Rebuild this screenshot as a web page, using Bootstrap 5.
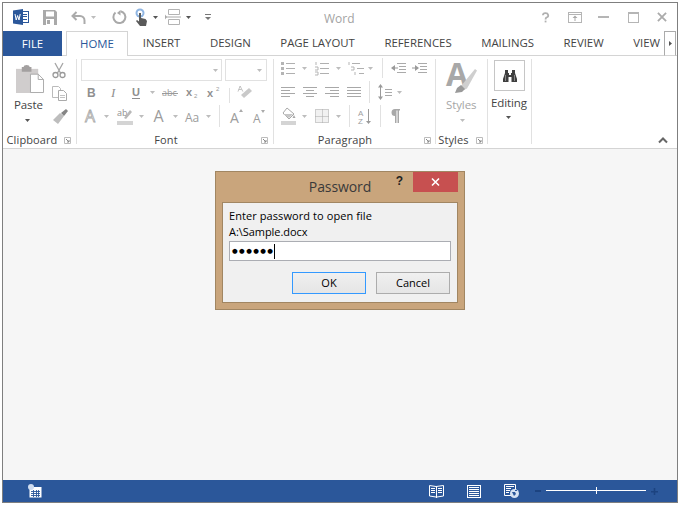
<!DOCTYPE html>
<html lang="en">
<head>
<meta charset="utf-8">
<title>Word</title>
<link href="https://cdn.jsdelivr.net/npm/bootstrap@5.3.0/dist/css/bootstrap.min.css" rel="stylesheet">
<style>
html,body{margin:0;background:#fff;height:100%;overflow:hidden}
body{padding:2px;font-family:"Open Sans","Noto Sans",sans-serif;color:#444}
svg{flex:none;display:block;overflow:visible}
.appwin{width:676px;height:501px;border:1px solid #7f7f7f;display:flex;flex-direction:column;background:#fff}
.titlerow{height:28px;align-items:center;flex:none}
.apptitle{position:absolute;left:321px;top:8px;font-size:12px;line-height:16px;color:#a3a3a3}
.tabrow{height:25px;flex:none;border-bottom:1px solid #d4d4d4;font-size:11.4px;color:#444}
.tabfile{width:59px;flex:none;margin-bottom:-1px;background:#2b579a;color:#fff;display:flex;align-items:center;justify-content:center}
.tabitem{display:flex;flex:none;align-items:center;padding:0 14.75px;line-height:24px;white-space:nowrap}
.tabactive{width:62px;margin-left:4px;margin-bottom:-1px;justify-content:center;padding:0;background:#fff;color:#2b579a;border:1px solid #d4d4d4;border-bottom:0}
.tabend{padding-right:2px}
.tabscroll{width:12px;flex:none;margin-left:auto;margin-right:1px;margin-bottom:-1px;border:1px solid #ababab;border-bottom-color:#d4d4d4;display:flex;align-items:center;justify-content:center}
.ribbonbar{height:93px;flex:none;padding-top:3px;border-bottom:1px solid #d4d4d4;background:#fff}
.rgroup{height:85px;flex:none;border-right:1px solid #e1e1e1;display:flex;flex-direction:column}
.rbody{height:75px;flex:none}
.rlabel{height:12px;flex:none;display:flex;align-items:center;font-size:11px;line-height:12px;color:#444;letter-spacing:.1px}
.rlabel span{text-align:center;white-space:nowrap}
.wclip{width:74px}.wfont{width:197px}.wpara{width:162px}.wstyles{width:52px}.wedit{width:44px}
.lb58{width:58px}.lb178{width:178px}.lb142{width:142px}.lb35{width:35px}
.combo1{width:141px;height:22px;border:1px solid #e1e1e1;margin-left:4px;display:flex;align-items:center;justify-content:flex-end;padding-right:3px}
.combo2{width:42px;height:22px;border:1px solid #e1e1e1;margin-left:3px;display:flex;align-items:center;justify-content:flex-end;padding-right:4px}
.trow{display:flex;align-items:center;height:24px}
.trow18{height:18px}.trow22{height:22px}.trow26{height:26px}
.vsep{width:1px;background:#e1e1e1;flex:none}
.vs15{height:15px;align-self:flex-end}.vs20{height:20px}.vs22{height:22px}
.l3{margin-left:3px}.l4{margin-left:4px}.l5{margin-left:5px}.l6{margin-left:6px}.l7{margin-left:7px}.l8{margin-left:8px}.l9{margin-left:9px}.l10{margin-left:10px}.l11{margin-left:11px}.l13{margin-left:13px}.l14{margin-left:14px}.l16{margin-left:16px}.l18{margin-left:18px}.l19{margin-left:19px}.l22{margin-left:22px}.l23{margin-left:23px}.l25{margin-left:25px}
.t1{margin-top:1px}.t2{margin-top:2px}.t3{margin-top:3px}.t4{margin-top:4px}.t6{margin-top:6px}
.bigtext{font-size:11.5px;line-height:20px;color:#444;letter-spacing:-.1px}
.bigdim{color:#a6a6a6}
.finder{width:31px;height:31px;border:1px solid #c6c6c6;margin-left:6px;margin-top:1px;display:flex;align-items:center;justify-content:center}
.rrest{flex:1;display:flex;align-items:flex-end;justify-content:flex-end;padding:0 9px 5px 0}
.docarea{flex:1;background:#f6f6f6;padding-top:22px;display:flex;justify-content:center;align-items:flex-start}
.pwbox{width:250px;height:139px;border:1px solid #a18662;background:#c9a57c;display:flex;flex-direction:column;color:#000}
.pwtop{height:30px;flex:none;display:flex;padding:0 6px}
.pwside{flex:1;display:flex;justify-content:flex-end;align-items:flex-start}
.pwtitle{font-size:14px;line-height:20px;padding-top:5px;color:#3a3a3a;white-space:nowrap;width:62px;display:flex;justify-content:center;letter-spacing:-.1px}
.pwhelp{font-size:12px;line-height:18px;font-weight:700;margin-right:10px;color:#222;font-family:"Liberation Sans",sans-serif}
.pwclose{width:45px;height:20px;background:#c75050;display:flex;align-items:center;justify-content:center}
.pwinner{height:101px;margin:0 6px;border:1px solid #a18662;background:#f0f0f0;padding:5px 6px 0;font-size:11px;line-height:16px;letter-spacing:.08px}
.pwpath{letter-spacing:-.05px}
.pwfield.form-control{width:222px;height:20px;margin-top:1px;border:1px solid #abadb3;border-radius:0;padding:0 2px;background:#fff;display:flex;align-items:center;font-family:"DejaVu Sans",sans-serif;font-size:6.5px;letter-spacing:1.4px;color:#000}
.pwdots{padding-top:2px}
.pwcaret{width:1px;height:15px;background:#000}
.pwbtn.btn{width:74px;height:22px;padding:0;border-radius:0;font-size:11px;line-height:20px;color:#000;border:1px solid #acacac;background:linear-gradient(#f0f0f0,#e5e5e5)}
.pwok.btn{border-color:#3399ff;margin-left:63px;margin-right:10px}
.pwbtnrow{margin-top:11px}
.statusrow{height:22px;flex:none;background:#2b579a;align-items:center}
.stick{width:100px;height:1px;margin-bottom:2px;background:#fff;flex:none;position:relative}
.stick::after{content:"";position:absolute;left:50px;top:-3px;width:1px;height:7px;background:#fff}
.endpad{width:19px;flex:none}
</style>
</head>
<body>
<svg width="0" height="0" class="position-absolute">
  <defs>
    <symbol id="cr" viewBox="0 0 5 3"><path d="M0 0h5L2.5 3z" fill="#bdbdbd"/></symbol>
    <symbol id="crd" viewBox="0 0 5 3"><path d="M0 0h5L2.5 3z" fill="#555"/></symbol>
    <symbol id="launch" viewBox="0 0 7 7"><path d="M.5.5h6v6h-6z" fill="none" stroke="#bcbcbc"/><path d="M2 2l3 3M5 3v2H3" fill="none" stroke="#888"/></symbol>
    <symbol id="al" viewBox="0 0 14 11"><path d="M0 .5h14M0 3.5h9M0 6.5h14M0 9.5h9" stroke="#a8a8a8"/></symbol>
    <symbol id="ac" viewBox="0 0 14 11"><path d="M0 .5h14M3 3.5h8M0 6.5h14M3 9.5h8" stroke="#a8a8a8"/></symbol>
    <symbol id="ar" viewBox="0 0 14 11"><path d="M0 .5h14M5 3.5h9M0 6.5h14M5 9.5h9" stroke="#a8a8a8"/></symbol>
    <symbol id="aj" viewBox="0 0 14 11"><path d="M0 .5h14M0 3.5h14M0 6.5h14M0 9.5h14" stroke="#a8a8a8"/></symbol>
  </defs>
</svg>
<div class="appwin">
  <div class="d-flex titlerow position-relative">
    <svg class="l10" width="16" height="16" viewBox="0 0 16 16"><rect x="6.500" y="2.500" width="9" height="11" fill="#fff" stroke="#2b579a"/><path d="M10 5.500h4M10 7.500h4M10 10.500h4" stroke="#2b579a"/><path d="M0 1.500l10-1.500v16l-10-1.500z" fill="#2b579a"/><path d="M2 5l1.200 6 1.400-4.500L6 11l1.200-6" fill="none" stroke="#fff" stroke-width="1"/></svg>
    <svg class="l14" width="14" height="15" viewBox="0 0 14 15"><path d="M0 0h12l2 2v13H0z" fill="#a9a9a9"/><rect x="3" y="1.500" width="8" height="5" fill="#fff"/><rect x="3" y="9" width="8" height="6" fill="#fff"/><rect x="4" y="10" width="3" height="4" fill="#a9a9a9"/></svg>
    <svg class="l14" width="15" height="13" viewBox="0 0 15 13"><path d="M5.500 1L1.500 5l4 4M2 5h7a4.500 4.500 0 0 1 4.500 4.500V13" fill="none" stroke="#ababab" stroke-width="2"/></svg>
    <svg class="l5" width="5" height="3"><use href="#cr"/></svg>
    <svg class="l16" width="14" height="14" viewBox="0 0 14 14"><path d="M3.500 2.500a6 6 0 1 0 5-1.300" fill="none" stroke="#a9a9a9" stroke-width="2"/><path d="M8.500 0v5.500L5 3z" fill="#a9a9a9"/></svg>
    <svg class="l9" width="13" height="18" viewBox="0 0 13 18"><circle cx="5" cy="5" r="4.500" fill="#8fb5e2"/><circle cx="5" cy="5" r="2.500" fill="#fff"/><path d="M4 5h2v5l4.500 1 1.500 2-1 5H5L1 13l1-1 2 1.500z" fill="#5a5a5a"/></svg>
    <svg class="l5" width="5" height="3"><use href="#crd"/></svg>
    <svg class="l7" width="16" height="16" viewBox="0 0 16 16"><path d="M3.500.5h11v5h-11zM3.500 10.500h11v5h-11z" fill="#fff" stroke="#b3b3b3"/><path d="M1 8h15" stroke="#a8a8a8"/><path d="M0 5.500l2 2.500-2 2.500z" fill="#a8a8a8"/></svg>
    <svg class="l5" width="5" height="3"><use href="#crd"/></svg>
    <svg class="l14" width="6" height="6" viewBox="0 0 6 6"><path d="M0 .5h6" stroke="#777"/><path d="M0 3h6L3 6z" fill="#777"/></svg>
    <span class="apptitle">Word</span>
    <svg class="ms-auto" width="8" height="11" viewBox="0 0 9 11"><path d="M1 3a3 2.500 0 1 1 4 2.500c-1 .6-1 1-1 2.200" fill="none" stroke="#b0b0b0" stroke-width="2"/><rect x="3" y="9" width="2" height="2" fill="#b0b0b0"/></svg>
    <svg class="l18" width="14" height="11" viewBox="0 0 14 11"><rect x=".5" y=".5" width="13" height="10" fill="#fff" stroke="#b5b5b5"/><path d="M1 2.500h12" stroke="#b5b5b5"/><path d="M7 3.500L4.500 6h5zM6.500 6h1v3h-1z" fill="#a9a9a9"/></svg>
    <svg class="l16" width="11" height="2"><rect width="11" height="2" fill="#b5b5b5"/></svg>
    <svg class="l19" width="11" height="11" viewBox="0 0 11 11"><rect x=".5" y=".5" width="10" height="10" fill="#fff" stroke="#b5b5b5"/><rect width="11" height="2" fill="#b5b5b5"/></svg>
    <svg class="l18" width="10" height="10" viewBox="0 0 11 11"><path d="M1 1l9 9M10 1l-9 9" stroke="#ababab" stroke-width="2"/></svg>
    <div class="l10"></div>
  </div>

  <div class="d-flex tabrow">
    <div class="tabfile">FILE</div>
    <div class="tabitem tabactive">HOME</div>
    <div class="tabitem">INSERT</div>
    <div class="tabitem">DESIGN</div>
    <div class="tabitem">PAGE LAYOUT</div>
    <div class="tabitem">REFERENCES</div>
    <div class="tabitem">MAILINGS</div>
    <div class="tabitem">REVIEW</div>
    <div class="tabitem tabend">VIEW</div>
    <div class="tabscroll"><svg width="3" height="5" viewBox="0 0 3 5"><path d="M0 0l3 2.500L0 5z" fill="#555"/></svg></div>
  </div>

  <div class="d-flex ribbonbar">
    <div class="rgroup wclip">
      <div class="rbody d-flex">
        <div class="d-flex flex-column align-items-start">
          <svg class="l13 t6" width="28" height="28" viewBox="0 0 29 29"><path d="M0 4h23v25H0z" fill="#d0cdcd"/><path d="M6 2h2a3 2 0 0 1 6 0h2v5H6z" fill="#a3a0a0"/><path d="M15 9.500h8l5.500 5.500v13.500H15z" fill="#fff" stroke="#aaa"/><path d="M23 9.500v5.500h5.500" fill="none" stroke="#aaa"/></svg>
          <span class="bigtext l11 t2">Paste</span>
          <svg class="t4 l22" width="5" height="3"><use href="#crd"/></svg>
        </div>
        <div class="d-flex flex-column gap-2 l8 t4">
          <svg width="14" height="15" viewBox="0 0 14 15"><path d="M3 0l5.500 10M11 0L5.500 10" stroke="#a5a5a5" stroke-width="1.300" fill="none"/><circle cx="3.500" cy="12" r="2.500" fill="none" stroke="#9a9a9a" stroke-width="1.300"/><circle cx="10.500" cy="12" r="2.500" fill="none" stroke="#9a9a9a" stroke-width="1.300"/></svg>
          <svg width="15" height="15" viewBox="0 0 15 15"><path d="M.5.500h6l2 2v9h-8z" fill="#fff" stroke="#bbb"/><path d="M6.500 4.500h5l3 3v7h-8z" fill="#fff" stroke="#aaa"/><path d="M8 9.500h5M8 11.500h5" stroke="#c3c3c3"/></svg>
          <svg width="16" height="15" viewBox="0 0 16 15"><path d="M1 11l7-7 4 3-6 8z" fill="#bdbdbd"/><path d="M9 4l5-4 2 2-4 5z" fill="#858585"/></svg>
        </div>
      </div>
      <div class="rlabel"><span class="lb58">Clipboard</span><svg class="l3" width="7" height="7"><use href="#launch"/></svg></div>
    </div>

    <div class="rgroup wfont">
      <div class="rbody">
        <div class="d-flex">
          <div class="combo1"><svg width="5" height="3"><use href="#cr"/></svg></div>
          <div class="combo2"><svg width="5" height="3"><use href="#cr"/></svg></div>
        </div>
        <div class="trow trow22">
          <svg class="l10" width="8" height="12"><text x="0" y="11" font-family="Liberation Sans" font-weight="700" font-size="12" fill="#8f8f8f">B</text></svg>
          <svg class="l16" width="7" height="12"><text x="0" y="11" font-family="Liberation Serif" font-style="italic" font-size="13" fill="#8f8f8f">I</text></svg>
          <svg class="l14" width="8" height="13" viewBox="0 0 8 13"><text x="0" y="10" font-family="Liberation Sans" font-weight="700" font-size="11" fill="#8f8f8f">U</text><path d="M0 12.500h8" stroke="#8f8f8f"/></svg>
          <svg class="l10" width="5" height="3"><use href="#cr"/></svg>
          <svg class="l7" width="16" height="12"><text x="0" y="10" font-family="Open Sans" font-size="9" fill="#9a9a9a">abc</text><path d="M0 7.500h16" stroke="#9a9a9a"/></svg>
          <svg class="l8" width="12" height="13"><text x="0" y="10" font-family="Liberation Sans" font-weight="700" font-size="11" fill="#8f8f8f">x</text><text x="8" y="12" font-family="Liberation Sans" font-size="6" fill="#999">2</text></svg>
          <svg class="l9" width="13" height="13"><text x="0" y="11" font-family="Liberation Sans" font-weight="700" font-size="11" fill="#8f8f8f">x</text><text x="9" y="5" font-family="Liberation Sans" font-size="6" fill="#999">2</text></svg>
          <div class="vsep vs15 l9"></div>
          <svg class="l8" width="16" height="15" viewBox="0 0 16 15"><path d="M6 13l8-7-3-3-8 7z" fill="#c9c9c9"/><path d="M3 0l4 8M3 0L0 8M1 5h4" stroke="#aaa" fill="none" transform="translate(0 1) scale(.7)"/></svg>
        </div>
        <div class="trow trow26">
          <svg class="l8" width="15" height="16"><text x="0" y="14" font-family="Open Sans" font-size="16" fill="#fff" stroke="#a9a9a9" stroke-width=".8">A</text></svg>
          <svg class="l4" width="5" height="3"><use href="#cr"/></svg>
          <svg class="l8" width="16" height="17" viewBox="0 0 16 17"><text x="0" y="8" font-family="Open Sans" font-size="9" fill="#8f8f8f">ab</text><path d="M7 10l6-8 2 2-6 7z" fill="#b8b8b8"/><rect y="13" width="16" height="4" fill="#d4d4d4"/></svg>
          <svg class="l6" width="5" height="3"><use href="#cr"/></svg>
          <svg class="l10" width="11" height="14"><text x="-.5" y="13" font-family="Open Sans" font-size="16" fill="#9c9c9c">A</text></svg>
          <svg class="l8" width="5" height="3"><use href="#cr"/></svg>
          <svg class="l7" width="15" height="14"><text x="0" y="13" font-family="Open Sans" font-size="12" fill="#9c9c9c">Aa</text></svg>
          <svg class="l6" width="5" height="3"><use href="#cr"/></svg>
          <div class="vsep vs22 l8"></div>
          <svg class="l10" width="13" height="15"><text x="0" y="14" font-family="Open Sans" font-size="14" fill="#9c9c9c">A</text><path d="M9 3h4L11 0z" fill="#aaa"/></svg>
          <svg class="l10" width="12" height="15"><text x="0" y="14" font-family="Open Sans" font-size="12" fill="#9c9c9c">A</text><path d="M8 1h4l-2 3z" fill="#aaa"/></svg>
        </div>
      </div>
      <div class="rlabel"><span class="lb178">Font</span><svg class="l6" width="7" height="7"><use href="#launch"/></svg></div>
    </div>

    <div class="rgroup wpara">
      <div class="rbody">
        <div class="trow trow18">
          <svg class="l7" width="14" height="13" viewBox="0 0 14 13"><path d="M0 0h3v3H0zM0 5h3v3H0zM0 10h3v3H0z" fill="#b5b5b5"/><path d="M5 1.500h9M5 6.500h9M5 11.500h9" stroke="#b0b0b0"/></svg>
          <svg class="l7" width="5" height="3"><use href="#cr"/></svg>
          <svg class="l8" width="14" height="13" viewBox="0 0 14 13"><path d="M1 0v3M0 5h3v3H0M0 10h3v3H0" fill="none" stroke="#b5b5b5"/><path d="M5 1.500h9M5 6.500h9M5 11.500h9" stroke="#b0b0b0"/></svg>
          <svg class="l7" width="5" height="3"><use href="#cr"/></svg>
          <svg class="l7" width="16" height="13" viewBox="0 0 16 13"><path d="M1 0v3M3 5h3v3H3M7 10v3" fill="none" stroke="#b5b5b5"/><path d="M4 1.500h8M9 6.500h7M11 11.500h5" stroke="#b0b0b0"/></svg>
          <svg class="l4" width="5" height="3"><use href="#cr"/></svg>
          <div class="vsep vs20 l9"></div>
          <svg class="l8" width="15" height="11" viewBox="0 0 15 11"><path d="M6 .500h9M8 3.500h7M8 6.500h7M6 9.500h9" stroke="#aaa"/><path d="M0 5l4-3v6z" fill="#9a9a9a"/><path d="M3 5h4" stroke="#9a9a9a"/></svg>
          <svg class="l6" width="15" height="11" viewBox="0 0 15 11"><path d="M6 .500h9M8 3.500h7M8 6.500h7M6 9.500h9" stroke="#aaa"/><path d="M7 5L3 2v6z" fill="#9a9a9a"/><path d="M0 5h4" stroke="#9a9a9a"/></svg>
        </div>
        <div class="trow t3">
          <svg class="l7" width="14" height="11"><use href="#al"/></svg>
          <svg class="l8" width="14" height="11"><use href="#ac"/></svg>
          <svg class="l8" width="14" height="11"><use href="#ar"/></svg>
          <svg class="l8" width="14" height="11"><use href="#aj"/></svg>
          <div class="vsep vs22 l8"></div>
          <svg class="l8" width="14" height="16" viewBox="0 0 14 16"><path d="M2.500 1v14" stroke="#9a9a9a"/><path d="M0 3.500l2.500-3.500L5 3.500zM0 12.500l2.500 3.500L5 12.500z" fill="#9a9a9a"/><path d="M7 5.500h7M7 8.500h7M7 11.500h7" stroke="#aaa"/></svg>
          <svg class="l5" width="5" height="3"><use href="#cr"/></svg>
        </div>
        <div class="trow">
          <svg class="l7" width="15" height="17" viewBox="0 0 15 17"><path d="M6 0l7 6-5 5-6-6z" fill="#fff" stroke="#a8a8a8"/><path d="M2 6h10l-4 4z" fill="#c6c6c6"/><path d="M13 7l1.500 3h-3z" fill="#a8a8a8"/><rect y="13" width="15" height="4" fill="#d4d4d4"/></svg>
          <svg class="l6" width="5" height="3"><use href="#cr"/></svg>
          <svg class="l8" width="14" height="14" viewBox="0 0 14 14"><rect width="14" height="14" fill="#f1f1f1"/><path d="M.5.500h13v13H.5zM7.500 .5v13M.5 7.500h13" fill="none" stroke="#a8a8a8" stroke-dasharray="1 1"/></svg>
          <svg class="l7" width="5" height="3"><use href="#cr"/></svg>
          <div class="vsep vs22 l8"></div>
          <svg class="l8" width="14" height="17" viewBox="0 0 14 17"><text x="0" y="7.500" font-family="Liberation Sans" font-size="8" fill="#a0a0a0">A</text><text x="0" y="16" font-family="Liberation Sans" font-size="8" fill="#a0a0a0">Z</text><path d="M10.500 1v14" stroke="#9a9a9a"/><path d="M8 13h5l-2.500 3z" fill="#9a9a9a"/></svg>
          <div class="vsep vs22 l8"></div>
          <svg class="l10" width="9" height="14" viewBox="0 0 9 14"><path d="M4 0a3.500 3.500 0 0 0 0 7v7h1.500V1.500h1V14H8V1.500h1V0z" fill="#a8a8a8"/></svg>
        </div>
      </div>
      <div class="rlabel"><span class="lb142">Paragraph</span><svg class="l8" width="7" height="7"><use href="#launch"/></svg></div>
    </div>

    <div class="rgroup wstyles">
      <div class="rbody d-flex flex-column align-items-start">
        <svg class="l10 t3" width="32" height="31" viewBox="0 0 32 31"><text x="0" y="24" font-family="Open Sans" font-weight="700" font-size="32" fill="#a8a8a8">A</text><path d="M15 24L29 7l2 1.500-10 18-3 1.500z" fill="#cfcfcf"/><path d="M9 31l2-5 4-3 4 4-3 3z" fill="#9a9a9a"/></svg>
        <span class="bigtext bigdim l10 t2">Styles</span>
        <svg class="t4 ms-4" width="5" height="3"><use href="#cr"/></svg>
      </div>
      <div class="rlabel"><span class="lb35">Styles</span><svg class="l5" width="7" height="7"><use href="#launch"/></svg></div>
    </div>

    <div class="rgroup wedit">
      <div class="rbody d-flex flex-column align-items-start">
        <div class="finder"><svg width="14" height="12" viewBox="0 0 14 12"><path d="M2 0h3v3h1v2h2V3h1V0h3v3l2 6v3H8.500V7h-3v5H0V9l2-6z" fill="#3f3f3f"/><path d="M2.500 5v6M11.500 5v6" stroke="#9a9a9a" stroke-width=".8"/></svg></div>
        <span class="bigtext l3 t2">Editing</span>
        <svg class="t3 l18" width="5" height="3"><use href="#crd"/></svg>
      </div>
    </div>

    <div class="rrest">
      <svg width="10" height="6" viewBox="0 0 10 6"><path d="M1 5.500l4-4 4 4" fill="none" stroke="#666" stroke-width="2"/></svg>
    </div>
  </div>

  <div class="docarea">
    <div class="pwbox">
      <div class="pwtop">
        <div class="pwside"></div>
        <div class="pwtitle">Password</div>
        <div class="pwside">
          <span class="pwhelp">?</span>
          <div class="pwclose"><svg width="9" height="8" viewBox="0 0 9 8"><path d="M1 .5l7 7M8 .5l-7 7" stroke="#fff" stroke-width="1.600"/></svg></div>
        </div>
      </div>
      <div class="pwinner">
        <div>Enter password to open file</div>
        <div class="pwpath">A:\Sample.docx</div>
        <div class="pwfield form-control"><span class="pwdots">●●●●●●</span><span class="pwcaret"></span></div>
        <div class="d-flex pwbtnrow">
          <button type="button" class="btn pwbtn pwok">OK</button>
          <button type="button" class="btn pwbtn">Cancel</button>
        </div>
      </div>
    </div>
  </div>

  <div class="d-flex statusrow">
    <svg class="l25" width="14" height="14" viewBox="0 0 14 14"><rect x="1.500" y="3" width="12" height="10.500" fill="#fff"/><path d="M3 7.500h9M3 9.500h9M3 11.500h9M5.500 6v7M8.500 6v7M10.500 6v7" stroke="#2b579a" stroke-width=".9"/><circle cx="3" cy="3" r="3" fill="#cfdcf0"/></svg>
    <svg class="ms-auto" width="15" height="13" viewBox="0 0 15 13"><path d="M.5.500L7 1.500l1-.1L14.500.5v10.500L8 12H7L.5 11z" fill="none" stroke="#fff"/><path d="M7.500 1v12M2 3.500h4M2 5.500h4M2 7.500h4M9 3.500h4M9 5.500h4M9 7.500h4" stroke="#fff"/></svg>
    <svg class="l23" width="14" height="13" viewBox="0 0 14 13"><rect x=".5" y=".5" width="13" height="12" fill="none" stroke="#fff"/><path d="M2 2.500h10M2 4.500h10M2 6.500h10M2 8.500h10M2 10.500h10" stroke="#fff"/></svg>
    <svg class="l23" width="15" height="14" viewBox="0 0 15 14"><path d="M.5.500h11v11H.5z" fill="none" stroke="#fff"/><path d="M2 2.500h8M2 4.500h5M2 6.500h4M2 8.500h3" stroke="#fff"/><circle cx="10.500" cy="9.500" r="4.500" fill="#d6e2f3"/><path d="M8 8h3l1 2-2 2zM11 6h2v1h-2z" fill="#2b579a"/></svg>
    <svg class="l16" width="6" height="2"><rect width="6" height="2" fill="#1c4380"/></svg>
    <div class="stick l5"></div>
    <svg class="l5" width="7" height="7" viewBox="0 0 7 7"><path d="M0 3h7v1.500H0zM2.700 0h1.600v7H2.700z" fill="#1c4380"/></svg>
    <div class="endpad"></div>
  </div>
</div>
</body>
</html>
